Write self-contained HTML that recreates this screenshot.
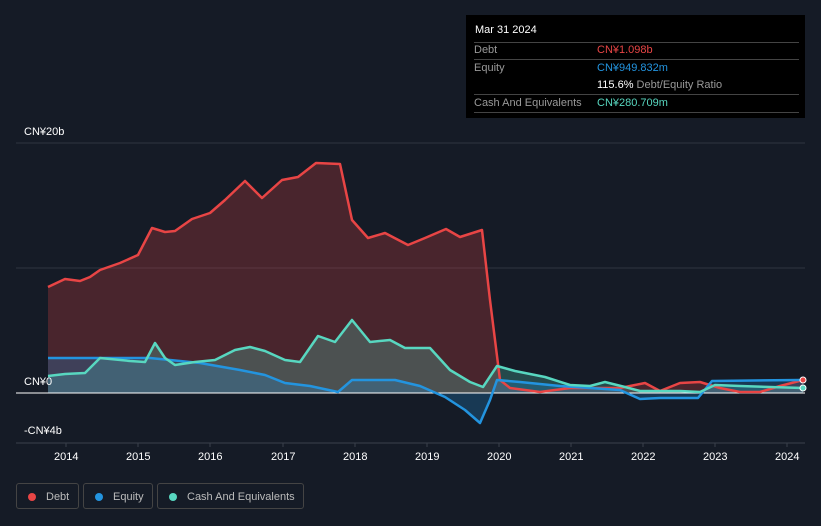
<!DOCTYPE html>
<html><head><meta charset="utf-8"><style>
body{margin:0;width:821px;height:526px;background:#151b26;font-family:"Liberation Sans",sans-serif;overflow:hidden;position:relative}
.t{position:absolute;color:#fff;font-size:11px}
.tip{position:absolute;left:466px;top:15px;width:339px;height:103px;background:#000;}
.row{position:absolute;left:8px;width:325px;font-size:11px;color:#999;border-bottom:1px solid #444;height:17px;line-height:17px}
.leg{position:absolute;top:483px;height:26px;border:1px solid #444;border-radius:3px;color:#bbb;font-size:11px;line-height:26px;box-sizing:border-box}
.dot{display:inline-block;width:8px;height:8px;border-radius:50%;margin:0 10px 0 11px;vertical-align:-1px}
</style></head><body>
<svg width="821" height="526" style="position:absolute;left:0;top:0">
<line x1="16" y1="143" x2="805" y2="143" stroke="#2e3440"/>
<line x1="16" y1="268" x2="805" y2="268" stroke="#2e3440"/>
<line x1="16" y1="443" x2="805" y2="443" stroke="#3a404c"/>
<g stroke="#3a404c"><line x1="66" y1="443" x2="66" y2="447"/><line x1="138" y1="443" x2="138" y2="447"/><line x1="210" y1="443" x2="210" y2="447"/><line x1="283" y1="443" x2="283" y2="447"/><line x1="355" y1="443" x2="355" y2="447"/><line x1="427" y1="443" x2="427" y2="447"/><line x1="499" y1="443" x2="499" y2="447"/><line x1="571" y1="443" x2="571" y2="447"/><line x1="643" y1="443" x2="643" y2="447"/><line x1="715" y1="443" x2="715" y2="447"/><line x1="787" y1="443" x2="787" y2="447"/></g>
<path d="M48,287 L65,279 L80,281 L90,277 L100,270 L120,263 L138,255 L152,228 L165,232 L175,231 L192,219 L210,213 L225,200 L245,181 L262,198 L282,180 L298,177 L316,163 L340,164 L352,220 L368,238 L385,233 L408,245 L425,238 L446,229 L460,237 L482,230 L490,300 L500,380 L510,388 L540,392 L570,388 L600,388 L620,388 L645,383 L660,391 L680,383 L700,382 L720,388 L740,392 L760,392 L780,386 L803,380 L803,393 L48,393Z" fill="#e84545" fill-opacity="0.25"/>
<path d="M48,376 L65,374 L85,373 L100,358 L130,361 L145,362 L155,343 L165,358 L175,365 L195,362 L215,360 L235,350 L250,347 L265,351 L285,360 L300,362 L318,336 L335,342 L352,320 L370,342 L390,340 L405,348 L430,348 L450,370 L470,382 L483,387 L497,366 L515,371 L545,377 L570,385 L590,386 L605,382 L625,387 L640,391 L680,391 L700,392 L715,385 L740,386 L770,387 L803,388 L803,393 L48,393Z" fill="#58d7c0" fill-opacity="0.25"/>
<path d="M48,358 L150,358 L200,363 L240,370 L265,375 L285,383 L310,386 L338,392 L352,380 L395,380 L420,386 L445,397 L465,410 L480,423 L490,400 L497,380 L520,382 L560,386 L620,390 L640,399 L660,398 L698,398 L712,381 L800,380 L803,380 L803,393 L48,393Z" fill="#2394df" fill-opacity="0.25"/>
<line x1="16" y1="393" x2="805" y2="393" stroke="#fff" stroke-width="1"/>
<path d="M48,287 L65,279 L80,281 L90,277 L100,270 L120,263 L138,255 L152,228 L165,232 L175,231 L192,219 L210,213 L225,200 L245,181 L262,198 L282,180 L298,177 L316,163 L340,164 L352,220 L368,238 L385,233 L408,245 L425,238 L446,229 L460,237 L482,230 L490,300 L500,380 L510,388 L540,392 L570,388 L600,388 L620,388 L645,383 L660,391 L680,383 L700,382 L720,388 L740,392 L760,392 L780,386 L803,380" fill="none" stroke="#e84545" stroke-width="2.5" stroke-linejoin="round"/>
<path d="M48,358 L150,358 L200,363 L240,370 L265,375 L285,383 L310,386 L338,392 L352,380 L395,380 L420,386 L445,397 L465,410 L480,423 L490,400 L497,380 L520,382 L560,386 L620,390 L640,399 L660,398 L698,398 L712,381 L800,380 L803,380" fill="none" stroke="#2394df" stroke-width="2.5" stroke-linejoin="round"/>
<path d="M48,376 L65,374 L85,373 L100,358 L130,361 L145,362 L155,343 L165,358 L175,365 L195,362 L215,360 L235,350 L250,347 L265,351 L285,360 L300,362 L318,336 L335,342 L352,320 L370,342 L390,340 L405,348 L430,348 L450,370 L470,382 L483,387 L497,366 L515,371 L545,377 L570,385 L590,386 L605,382 L625,387 L640,391 L680,391 L700,392 L715,385 L740,386 L770,387 L803,388" fill="none" stroke="#58d7c0" stroke-width="2.5" stroke-linejoin="round"/>
<circle cx="803" cy="380" r="3" fill="#e84545" stroke="#fff"/><circle cx="803" cy="388" r="3" fill="#58d7c0" stroke="#fff"/>
</svg>
<div class="t" style="left:24px;top:126px">CN¥20b</div>
<div class="t" style="left:24px;top:376px">CN¥0</div>
<div class="t" style="left:24px;top:425px">-CN¥4b</div>
<div class="t" style="left:54px;top:451px">2014</div><div class="t" style="left:126px;top:451px">2015</div><div class="t" style="left:198px;top:451px">2016</div><div class="t" style="left:271px;top:451px">2017</div><div class="t" style="left:343px;top:451px">2018</div><div class="t" style="left:415px;top:451px">2019</div><div class="t" style="left:487px;top:451px">2020</div><div class="t" style="left:559px;top:451px">2021</div><div class="t" style="left:631px;top:451px">2022</div><div class="t" style="left:703px;top:451px">2023</div><div class="t" style="left:775px;top:451px">2024</div>
<div class="tip">
<div style="position:absolute;left:9px;top:9px;color:#fff;font-size:11px">Mar 31 2024</div>
<div style="position:absolute;left:8px;top:27px;width:325px;border-top:1px solid #444"></div>
<div class="row" style="top:27px">Debt<span style="position:absolute;left:123px;color:#e84545">CN¥1.098b</span></div>
<div class="row" style="top:45px;border:none">Equity<span style="position:absolute;left:123px;color:#2394df">CN¥949.832m</span></div>
<div class="row" style="top:62px"><span style="position:absolute;left:123px"><b style="color:#fff;font-weight:normal">115.6%</b> Debt/Equity Ratio</span></div>
<div class="row" style="top:80px">Cash And Equivalents<span style="position:absolute;left:123px;color:#58d7c0">CN¥280.709m</span></div>
</div>
<div class="leg" style="left:16px;width:63px"><span class="dot" style="background:#e84545"></span>Debt</div>
<div class="leg" style="left:83px;width:70px"><span class="dot" style="background:#2394df"></span>Equity</div>
<div class="leg" style="left:157px;width:147px"><span class="dot" style="background:#58d7c0"></span>Cash And Equivalents</div>
</body></html>
